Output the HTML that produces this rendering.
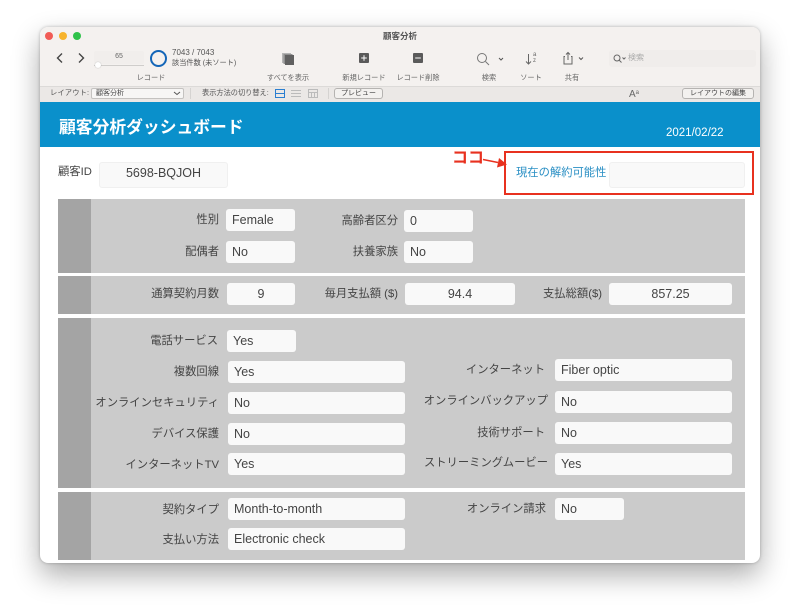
<!DOCTYPE html>
<html lang="ja"><head><meta charset="utf-8"><title>顧客分析</title>
<style>
html,body{margin:0;padding:0;background:#fff}
body{width:800px;height:616px;overflow:hidden;position:relative;font-family:"Liberation Sans","Noto Sans CJK JP",sans-serif;color:#444}
.win{position:absolute;left:40px;top:27px;width:720px;height:536px;border-radius:8px;background:#fff;box-shadow:0 12px 28px rgba(0,0,0,.33),0 0 3px rgba(0,0,0,.25)}
.a{position:absolute;white-space:nowrap}
.tb{position:absolute;left:40px;top:27px;width:720px;height:59px;background:#f4f1ef;border-radius:8px 8px 0 0}
.lb{position:absolute;left:40px;top:86px;width:720px;height:16px;background:#ebe8e6;border-top:1px solid #dcdad8;box-sizing:border-box}
.t{position:absolute;white-space:nowrap;font-size:7.2px;color:#666;line-height:10px}
.c{transform:translateX(-50%)}
.sec{position:absolute;left:58px;width:687px;background:#cbcbcb}
.sec i{position:absolute;left:0;top:0;bottom:0;width:33px;background:#a4a4a4}
.f{position:absolute;height:22px;line-height:22px;background:#f9f9f9;border-radius:3px;font-size:12.5px;color:#444;box-sizing:border-box;padding-left:6px;white-space:nowrap}
.n{text-align:center;padding-left:0}
.l{position:absolute;white-space:nowrap;font-size:11.3px;line-height:24px;color:#444;text-align:right}
.btn{position:absolute;border:1px solid #b5b3b1;border-radius:3px;background:#f3f1ef;font-size:7px;line-height:9px;text-align:center;color:#444;box-sizing:border-box}
</style></head><body>
<div class="win"></div>
<div class="tb"></div>
<div class="lb"></div>
<!-- traffic lights -->
<div class="a" style="left:45px;top:32px;width:8px;height:8px;border-radius:50%;background:#f15b55"></div>
<div class="a" style="left:59px;top:32px;width:8px;height:8px;border-radius:50%;background:#f7b32c"></div>
<div class="a" style="left:73px;top:32px;width:8px;height:8px;border-radius:50%;background:#2fc24a"></div>
<div class="a" style="left:340px;width:120px;top:30px;text-align:center;font-size:8.5px;line-height:12px;font-weight:bold;color:#555">顧客分析</div>
<!-- nav -->
<svg class="a" style="left:54px;top:52px" width="34" height="12" fill="none" stroke="#444" stroke-width="1.4"><path d="M8 1.5 3.5 6 8 10.5"/><path d="M25 1.5 29.5 6 25 10.5"/></svg>
<div class="a" style="left:94px;top:51px;width:50px;height:13px;background:#f1eeec;border-radius:2px;font-size:7px;line-height:11px;text-align:center;color:#666">65</div>
<div class="a" style="left:94px;top:65px;width:50px;height:1px;background:#cfcdcb"></div>
<div class="a" style="left:95px;top:62px;width:6px;height:6px;border-radius:50%;background:#fff;box-shadow:0 0 1px #999"></div>
<div class="a" style="left:150px;top:50px;width:17px;height:17px;border:2.5px solid #1466b8;border-radius:50%;box-sizing:border-box"></div>
<div class="t" style="left:172px;top:48px;font-size:8px;color:#555">7043 / 7043</div>
<div class="t" style="left:172px;top:58px;font-size:7.2px;color:#555">該当件数 (未ソート)</div>
<div class="t c" style="left:151px;top:73px">レコード</div>
<!-- toolbar icons -->
<svg class="a" style="left:281px;top:53px" width="14" height="13"><rect x="1" y="0" width="9" height="10" fill="#b5b5b5"/><rect x="2.500" y="1" width="9" height="10" fill="#909090"/><rect x="4" y="2" width="9" height="10" fill="#606060"/></svg>
<div class="t c" style="left:288px;top:73px">すべてを表示</div>
<svg class="a" style="left:359px;top:53px" width="10" height="10"><rect width="10" height="10" rx="1" fill="#5a5a5a"/><path d="M5 2.200v5.600M2.200 5h5.600" stroke="#fff" stroke-width="1"/></svg>
<div class="t c" style="left:364px;top:73px">新規レコード</div>
<svg class="a" style="left:413px;top:53px" width="10" height="10"><rect width="10" height="10" rx="1" fill="#5a5a5a"/><path d="M2.200 5h5.600" stroke="#fff" stroke-width="1"/></svg>
<div class="t c" style="left:418px;top:73px">レコード削除</div>
<svg class="a" style="left:476px;top:52px" width="34" height="14" fill="none" stroke="#777"><circle cx="6" cy="6" r="4.500"/><path d="M9.500 9.500 13 13"/><path d="M23 6l2 2 2-2" stroke="#555" stroke-width="1"/></svg>
<div class="t c" style="left:489px;top:73px">検索</div>
<svg class="a" style="left:525px;top:53px" width="8" height="13" fill="none" stroke="#666"><path d="M3.500 1v10M1 8.500 3.500 11 6 8.500"/></svg>
<div class="t" style="left:533px;top:52px;font-size:6px;line-height:6px;color:#666">a<br>z</div>
<div class="t c" style="left:531px;top:73px">ソート</div>
<svg class="a" style="left:562px;top:51px" width="26" height="15" fill="none" stroke="#666"><path d="M3 5.500h-1v7.500h8v-7.500h-1M6 9V1.500M4 3.500 6 1.500 8 3.500"/><path d="M17 6.500l2 2 2-2" stroke="#555"/></svg>
<div class="t c" style="left:572px;top:73px">共有</div>
<div class="a" style="left:609px;top:50px;width:147px;height:17px;background:#f0edeb;border-radius:3px"></div>
<svg class="a" style="left:613px;top:54px" width="14" height="10" fill="none" stroke="#666"><circle cx="4" cy="4" r="3"/><path d="M6 6 8.500 8.500M9.500 3.500l1.500 1.500 1.500-1.500"/></svg>
<div class="t" style="left:628px;top:53px;font-size:8px;color:#aaa">検索</div>
<!-- layout bar -->
<div class="t" style="left:50px;top:88px;font-size:7.300px;color:#555;letter-spacing:.1px">レイアウト:</div>
<div class="a" style="left:91px;top:88px;width:93px;height:11px;background:#f7f6f5;border:1px solid #c4c2c0;border-radius:2px;box-sizing:border-box;font-size:7px;line-height:9px;padding-left:4px;color:#444">顧客分析</div>
<svg class="a" style="left:173px;top:91px" width="8" height="5" fill="none" stroke="#555"><path d="M1 1l3 2.500L7 1"/></svg>
<div class="a" style="left:190px;top:88px;width:1px;height:11px;background:#d5d3d1"></div>
<div class="t" style="left:202px;top:88px;font-size:7.200px;color:#555">表示方法の切り替え:</div>
<svg class="a" style="left:275px;top:89px" width="44" height="9" fill="none"><path d="M.5 .5h9v8h-9zM.5 4.500h9" stroke="#2b7fd0"/><path d="M16 1.500h10M16 4.500h10M16 7.500h10" stroke="#bbb"/><path d="M33.500 .5h9v8h-9zM33.500 3.500h9M36.500 3.500v5M39.500 3.500v5" stroke="#bbb"/></svg>
<div class="a" style="left:328px;top:88px;width:1px;height:11px;background:#d5d3d1"></div>
<div class="btn" style="left:334px;top:88px;width:49px;height:11px">プレビュー</div>
<div class="a" style="left:629px;top:86px;font-size:10px;line-height:14px;color:#666">A<span style="font-size:6px;vertical-align:3px">a</span></div>
<div class="btn" style="left:682px;top:88px;width:72px;height:11px">レイアウトの編集</div>
<!-- blue header -->
<div class="a" style="left:40px;top:102px;width:720px;height:45px;background:#0a90cb"></div>
<div class="a" style="left:59px;top:116px;font-size:16.800px;line-height:24px;font-weight:bold;color:#fff">顧客分析ダッシュボード</div>
<div class="a" style="left:666px;top:126px;font-size:11.500px;line-height:14px;color:#fff">2021/02/22</div>
<!-- top row -->
<div class="l" style="left:58px;top:160px">顧客ID</div>
<div class="f n" style="left:99px;top:162px;width:129px;height:26px;line-height:21px;border:1px solid #f0f0f0">5698-BQJOH</div>
<div class="a" style="left:504px;top:151px;width:250px;height:44px;border:2px solid #e8311f;box-sizing:border-box"></div>
<div class="l" style="left:516px;top:161px;color:#2a8fc4">現在の解約可能性</div>
<div class="f" style="left:609px;top:162px;width:136px;height:26px;border:1px solid #f0f0f0"></div>
<div class="a" style="left:452px;top:149px;font-size:16px;line-height:20px;font-weight:bold;color:#e8311f">ココ</div>
<svg class="a" style="left:482px;top:157px" width="28" height="14"><path d="M1 2.500 16 5.500" stroke="#e8311f" stroke-width="1.600"/><path d="M25 7.500 15 10.500 17 1z" fill="#e8311f"/></svg>
<!-- sections -->
<div class="sec" style="top:199px;height:74px"><i></i></div>
<div class="sec" style="top:276px;height:38px"><i></i></div>
<div class="sec" style="top:318px;height:170px"><i></i></div>
<div class="sec" style="top:492px;height:68px"><i></i></div>
<!-- s1 -->
<div class="l" style="right:581px;top:208px">性別</div><div class="f" style="left:226px;top:209px;width:69px">Female</div>
<div class="l" style="right:581px;top:240px">配偶者</div><div class="f" style="left:226px;top:241px;width:69px">No</div>
<div class="l" style="right:402px;top:209px">高齢者区分</div><div class="f" style="left:404px;top:210px;width:69px">0</div>
<div class="l" style="right:402px;top:240px">扶養家族</div><div class="f" style="left:404px;top:241px;width:69px">No</div>
<!-- s2 -->
<div class="l" style="right:581px;top:282px">通算契約月数</div><div class="f n" style="left:227px;top:283px;width:68px">9</div>
<div class="l" style="right:402px;top:282px">毎月支払額 ($)</div><div class="f n" style="left:405px;top:283px;width:110px">94.4</div>
<div class="l" style="right:198px;top:282px">支払総額($)</div><div class="f n" style="left:609px;top:283px;width:123px">857.25</div>
<!-- s3 -->
<div class="l" style="right:582px;top:329px">電話サービス</div><div class="f" style="left:227px;top:330px;width:69px">Yes</div>
<div class="l" style="right:581px;top:360px">複数回線</div><div class="f" style="left:228px;top:361px;width:177px">Yes</div>
<div class="l" style="right:581px;top:391px">オンラインセキュリティ</div><div class="f" style="left:228px;top:392px;width:177px">No</div>
<div class="l" style="right:581px;top:422px">デバイス保護</div><div class="f" style="left:228px;top:423px;width:177px">No</div>
<div class="l" style="right:581px;top:453px">インターネットTV</div><div class="f" style="left:228px;top:453px;width:177px">Yes</div>
<div class="l" style="right:255px;top:358px">インターネット</div><div class="f" style="left:555px;top:359px;width:177px">Fiber optic</div>
<div class="l" style="right:252px;top:389px">オンラインバックアップ</div><div class="f" style="left:555px;top:391px;width:177px">No</div>
<div class="l" style="right:255px;top:421px">技術サポート</div><div class="f" style="left:555px;top:422px;width:177px">No</div>
<div class="l" style="right:252px;top:451px">ストリーミングムービー</div><div class="f" style="left:555px;top:453px;width:177px">Yes</div>
<!-- s4 -->
<div class="l" style="right:581px;top:498px">契約タイプ</div><div class="f" style="left:228px;top:498px;width:177px">Month-to-month</div>
<div class="l" style="right:581px;top:528px">支払い方法</div><div class="f" style="left:228px;top:528px;width:177px">Electronic check</div>
<div class="l" style="right:254px;top:497px">オンライン請求</div><div class="f" style="left:555px;top:498px;width:69px">No</div>
</body></html>
